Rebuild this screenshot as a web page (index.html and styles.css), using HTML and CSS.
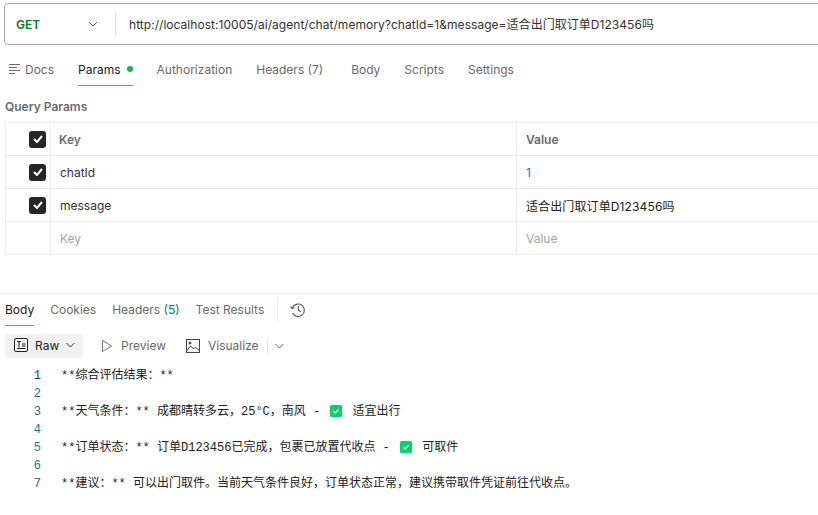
FILE: index.html
```html
<!DOCTYPE html>
<html lang="zh">
<head>
<meta charset="utf-8">
<title>Request</title>
<link rel="stylesheet" href="styles.css">
</head>
<body>
<div class="urlbar">
  <div class="method"><span class="get">GET</span>
    <svg class="chev" width="10" height="6" viewBox="0 0 10 6"><path d="M1 1l4 4 4-4" fill="none" stroke="#6b6b6b" stroke-width="1"/></svg>
  </div>
  <div class="url">http://localhost:10005/ai/agent/chat/memory?chatId=1&amp;message=适合出门取订单D123456吗</div>
</div>
<nav class="tabs req-tabs">
  <span class="tab docs"><svg width="11" height="10" viewBox="0 0 11 10"><path d="M0 .5h11M0 3.5h8M0 6.5h11M0 9.5h6" stroke="#6b6b6b" stroke-width="1" fill="none"/></svg>Docs</span>
  <span class="tab active params">Params<i class="dot"></i></span>
  <span class="tab auth">Authorization</span>
  <span class="tab hdrs">Headers (7)</span>
  <span class="tab body-t">Body</span>
  <span class="tab scripts">Scripts</span>
  <span class="tab">Settings</span>
</nav>
<h2 class="qp">Query Params</h2>
<div class="table">
  <div class="cell chk"><span class="box"><svg width="10" height="8" viewBox="0 0 10 8"><path d="M1 4l3 3 5-6" fill="none" stroke="#fff" stroke-width="2"/></svg></span></div>
  <div class="cell head">Key</div>
  <div class="cell head last">Value</div>
  <div class="cell chk"><span class="box"><svg width="10" height="8" viewBox="0 0 10 8"><path d="M1 4l3 3 5-6" fill="none" stroke="#fff" stroke-width="2"/></svg></span></div>
  <div class="cell val">chatId</div>
  <div class="cell val blue last">1</div>
  <div class="cell chk"><span class="box"><svg width="10" height="8" viewBox="0 0 10 8"><path d="M1 4l3 3 5-6" fill="none" stroke="#fff" stroke-width="2"/></svg></span></div>
  <div class="cell val">message</div>
  <div class="cell val dark last">适合出门取订单D123456吗</div>
  <div class="cell chk"></div>
  <div class="cell ph">Key</div>
  <div class="cell ph last">Value</div>
</div>
<section class="resp">
  <nav class="tabs res-tabs">
    <span class="tab active">Body</span>
    <span class="tab">Cookies</span>
    <span class="tab">Headers <span class="count">(5)</span></span>
    <span class="tab">Test Results</span>
    <span class="sep"></span>
    <svg class="hist" width="16" height="16" viewBox="0 0 16 16" fill="none" stroke="#555" stroke-width="1.1"><path d="M2.3 6.2A6.2 6.2 0 1 1 2.6 11"/><path d="M.6 4.6l1.6 2 2-1.4"/><path d="M8.3 4v4.3l2.6 1.5"/></svg>
  </nav>
  <div class="toolbar">
    <span class="raw">
      <svg width="14" height="14" viewBox="0 0 14 14" fill="none" stroke="#222" stroke-width="1"><rect x=".5" y=".5" width="13" height="13" rx="1.5"/><path d="M3 3.5h4M5 3.5v6M8 6h3.5M8 8h3.5M3 10.5h8.500"/></svg>
      Raw
      <svg width="9" height="6" viewBox="0 0 9 6"><path d="M.5 1l4 4 4-4" fill="none" stroke="#333"/></svg>
    </span>
    <span class="view preview"><svg width="12" height="14" viewBox="0 0 12 14"><path d="M1.500 1.500v11l9-5.500z" fill="none" stroke="#777"/></svg>Preview</span>
    <span class="view visualize"><svg width="14" height="14" viewBox="0 0 14 14" fill="none" stroke="#444"><rect x=".5" y=".5" width="13" height="13"/><path d="M.5 12l4-5 3 3 2-2 4 4"/><circle cx="4" cy="4" r="1" fill="#444"/></svg>Visualize</span>
    <span class="vsep"></span>
    <svg class="more" width="9" height="6" viewBox="0 0 9 6"><path d="M.5 1l4 4 4-4" fill="none" stroke="#666"/></svg>
  </div>
  <div class="code">
    <div class="ln"><span class="no cur">1</span><span>**综合评估结果：**</span></div>
    <div class="ln"><span class="no">2</span><span></span></div>
    <div class="ln"><span class="no">3</span><span>**天气条件：** 成都晴转多云，25°C，南风 - <svg class="ok" width="12" height="12" viewBox="0 0 12 12"><rect width="12" height="12" rx="1.500" fill="#0ecf6e"/><path d="M3.200 6l2 2 3.600-3.800" fill="none" stroke="#fff" stroke-width="1.200"/></svg> 适宜出行</span></div>
    <div class="ln"><span class="no">4</span><span></span></div>
    <div class="ln"><span class="no">5</span><span>**订单状态：** 订单D123456已完成，包裹已放置代收点 - <svg class="ok" width="12" height="12" viewBox="0 0 12 12"><rect width="12" height="12" rx="1.500" fill="#0ecf6e"/><path d="M3.200 6l2 2 3.600-3.800" fill="none" stroke="#fff" stroke-width="1.200"/></svg> 可取件</span></div>
    <div class="ln"><span class="no">6</span><span></span></div>
    <div class="ln"><span class="no">7</span><span>**建议：** 可以出门取件。当前天气条件良好，订单状态正常，建议携带取件凭证前往代收点。</span></div>
  </div>
</section>
</body>
</html>
```
FILE: styles.css
```css
* { box-sizing: border-box; }
html, body { margin: 0; height: 100%; overflow: hidden; background: #fff; }
body {
  width: 818px;
  height: 515px;
  font-family: Inter, "Noto Sans CJK SC", sans-serif;
  font-size: 12px;
  color: #6b6b6b;
  padding-top: 3px;
}
.urlbar {
  margin-left: 4px;
  width: 820px;
  height: 42px;
  border: 1px solid #a8a8a8;
  border-radius: 4px;
  display: flex;
  align-items: center;
  color: #212121;
}
.method {
  width: 111px;
  height: 24px;
  border-right: 1px solid #e2e2e2;
  display: flex;
  align-items: center;
  padding-left: 11px;
  flex: none;
}
.get { color: #007f31; font-weight: 600; width: 72px; }
.chev { display: block; }
.url { padding-left: 13px; color: #333; margin-top: -2px; white-space: nowrap; letter-spacing: .04px; }
.tabs { display: flex; align-items: center; }
.req-tabs { height: 34px; margin-top: 7px; padding-left: 9px; }
.tab { display: inline-flex; align-items: center; height: 100%; white-space: pre; position: relative; }
.docs svg { margin-right: 5px; }
.params { margin-left: 24px; }
.auth { margin-left: 24px; }
.hdrs { margin-left: 24px; }
.body-t { margin-left: 28px; }
.scripts { margin-left: 24px; }
.scripts + .tab { margin-left: 24px; }
.active { color: #212121; }
.req-tabs .active::after, .res-tabs .active::after {
  content: "";
  position: absolute;
  left: 0; right: 0; bottom: 0;
  height: 1px;
  background: #f26b3a;
}
.dot { width: 6px; height: 6px; border-radius: 50%; background: #0cbb52; margin-left: 6px; }
.qp { margin: 13px 0 0 5px; font-size: 12px; line-height: 15px; font-weight: 600; color: #6b6b6b; }
.table {
  margin: 8px 0 0 5px;
  display: grid;
  grid-template-columns: 46px 466px 320px;
  grid-auto-rows: 33px;
  width: 832px;
  border-top: 1px solid #ededed;
}
.cell {
  border-right: 1px solid #ededed;
  border-bottom: 1px solid #ededed;
  display: flex;
  align-items: center;
  padding-left: 9px;
  color: #333;
}
.chk { border-left: 1px solid #ededed; padding-left: 23px; }
.head { font-weight: 600; color: #6b6b6b; padding-left: 8px; }
.head.last { padding-left: 9px; }
.val { color: #333; }
.val.blue { color: #1478c8; }
.val.dark { color: #212121; letter-spacing: .12px; }
.ph { color: #a6a6a6; }
.box {
  width: 17px; height: 17px;
  background: #262626;
  border-radius: 3px;
  display: flex;
  align-items: center;
  justify-content: center;
}
.resp { margin-top: 38px; border-top: 1px solid #ededed; }
.res-tabs { height: 32px; padding-left: 5px; gap: 16px; color: #6b6b6b; }
.res-tabs .tab { padding-bottom: 2px; }
.count { color: #0a7a6a; }
.sep { width: 1px; height: 24px; background: #e6e6e6; margin-left: -3px; }
.hist { margin-left: -4px; }
.toolbar { display: flex; align-items: center; margin: 8px 0 0 5px; height: 24px; padding-bottom: 1px; }
.raw {
  width: 78px; height: 24px;
  background: #f2f2f2;
  border-radius: 4px;
  color: #212121;
  display: flex;
  align-items: center;
  gap: 7px;
  padding: 0 0 1px 9px;
  flex: none;
}
.view { display: inline-flex; align-items: center; gap: 7px; color: #6b6b6b; }
.preview { margin-left: 18px; }
.preview svg { margin-right: 1px; }
.visualize { margin-left: 20px; }
.visualize svg { margin-right: 1px; }
.vsep { width: 1px; height: 16px; background: #e6e6e6; margin-left: 8px; }
.more { margin-left: 7px; }
.code {
  margin-top: 9px;
  font-family: "Liberation Mono", "Noto Sans CJK SC", monospace;
  font-size: 12px;
  color: #212121;
}
.ln { display: flex; height: 18px; line-height: 18px; white-space: pre; }
.no { width: 61px; flex: none; padding-right: 20px; text-align: right; color: #1d6f8f; }
.cur { color: #0b4f6c; }
.ok { vertical-align: -2px; margin: 0 3px; }
```
